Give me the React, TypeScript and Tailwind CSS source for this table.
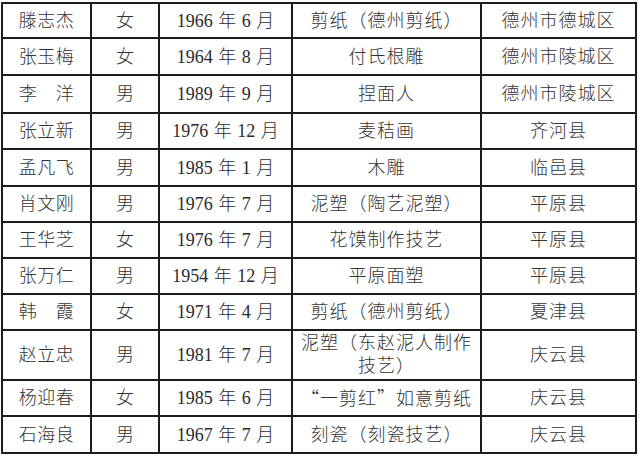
import React from "react";

type Row = { name: string; sex: string; date: string; craft: React.ReactNode; place: string; h: string };

const cjk = { fontFamily: '"Noto Sans CJK SC", sans-serif' };

const rows: Row[] = [
  { name: "滕志杰", sex: "女", date: "1966 年 6 月", craft: "剪纸（德州剪纸）", place: "德州市德城区", h: "h-[33px]" },
  { name: "张玉梅", sex: "女", date: "1964 年 8 月", craft: "付氏根雕", place: "德州市陵城区", h: "h-[35px]" },
  { name: "李　洋", sex: "男", date: "1989 年 9 月", craft: "捏面人", place: "德州市陵城区", h: "h-[36px]" },
  { name: "张立新", sex: "男", date: "1976 年 12 月", craft: "麦秸画", place: "齐河县", h: "h-[34px]" },
  { name: "孟凡飞", sex: "男", date: "1985 年 1 月", craft: "木雕", place: "临邑县", h: "h-[35px]" },
  { name: "肖文刚", sex: "男", date: "1976 年 7 月", craft: "泥塑（陶艺泥塑）", place: "平原县", h: "h-[34px]" },
  { name: "王华芝", sex: "女", date: "1976 年 7 月", craft: "花馍制作技艺", place: "平原县", h: "h-[34px]" },
  { name: "张万仁", sex: "男", date: "1954 年 12 月", craft: "平原面塑", place: "平原县", h: "h-[34px]" },
  { name: "韩　霞", sex: "女", date: "1971 年 4 月", craft: "剪纸（德州剪纸）", place: "夏津县", h: "h-[34px]" },
  {
    name: "赵立忠",
    sex: "男",
    date: "1981 年 7 月",
    craft: (
      <span className="leading-[23px]">
        泥塑（东赵泥人制作
        <br />
        技艺）
      </span>
    ),
    place: "庆云县",
    h: "h-[48px]",
  },
  {
    name: "杨迎春",
    sex: "女",
    date: "1985 年 6 月",
    craft: (
      <span>
        <span style={cjk}>“</span>一剪红<span style={cjk}>”</span>如意剪纸
      </span>
    ),
    place: "庆云县",
    h: "h-[34px]",
  },
  { name: "石海良", sex: "男", date: "1967 年 7 月", craft: "刻瓷（刻瓷技艺）", place: "庆云县", h: "h-[35px]" },
];

const cell = "bg-white flex items-center justify-center text-center";

export default function App() {
  return (
    <div className="w-[640px] h-[459px] bg-white overflow-hidden">
      <div
        className="ml-[1px] mt-[2px] w-[636px] bg-[#1c1c1c] p-[2px] grid grid-cols-[87px_66px_131px_187px_153px] gap-[2px] text-[18px] text-[#333333] font-light leading-none"
        style={{ fontFamily: '"Liberation Serif", "Noto Sans CJK SC", serif' }}
      >
        {rows.map((r, i) => (
          <React.Fragment key={i}>
            <div className={`${cell} ${r.h} tracking-[0.5px]`}>{r.name}</div>
            <div className={`${cell} ${r.h}`}>{r.sex}</div>
            <div className={`${cell} ${r.h} whitespace-pre text-[#2b2b2b] [word-spacing:1px]`}>{r.date}</div>
            <div className={`${cell} ${r.h} tracking-[1px]`}>{r.craft}</div>
            <div className={`${cell} ${r.h} tracking-[1px]`}>{r.place}</div>
          </React.Fragment>
        ))}
      </div>
    </div>
  );
}
